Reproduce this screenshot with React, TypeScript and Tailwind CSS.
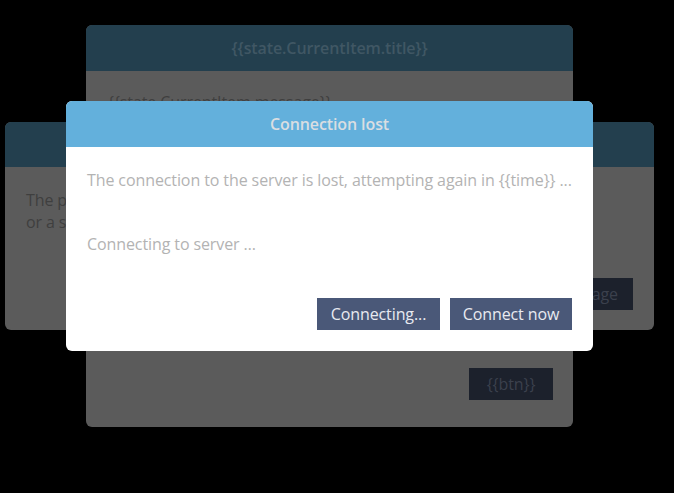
export default function App() {
  return (
    <div className="relative h-[493px] w-[674px] overflow-hidden bg-black font-['Open_Sans',sans-serif] tracking-[-0.1px]">
      {/* back window: item */}
      <div className="absolute left-[86px] top-[25px] flex h-[402px] w-[487px] flex-col overflow-hidden rounded-md bg-[#5b5b5b]">
        <div className="flex h-[46px] items-center justify-center bg-[#233f4e] text-[16px] font-semibold text-[#405764]">
          {"{{state.CurrentItem.title}}"}
        </div>
        <div className="flex flex-1 flex-col pb-[27px] pl-[22px] pr-[20px] pt-[20px]">
          <p className="text-[16px] leading-[22px] text-[#3f3f3f]">{"{{state.CurrentItem.message}}"}</p>
          <div className="mt-auto flex justify-end">
            <button className="h-[32px] w-[84px] bg-[#1c212c] text-[16px] text-[#3b404c]">{"{{btn}}"}</button>
          </div>
        </div>
      </div>

      {/* back window: page */}
      <div className="absolute left-[5px] top-[122px] flex h-[208px] w-[649px] flex-col overflow-hidden rounded-md bg-[#5b5b5b]">
        <div className="flex h-[45px] items-center justify-center bg-[#233f4e] text-[16px] font-semibold text-[#405764]">
          Page out of date
        </div>
        <div className="flex flex-1 flex-col px-[21px] pb-[20px] pt-[22px]">
          <p className="text-[16px] leading-[22px] text-[#3f3f3f]">
            The page could not be refreshed. This can be caused by a network issue
            <br />
            or a server that is not responding.
          </p>
          <div className="mt-auto flex justify-end">
            <button className="h-[32px] bg-[#1c212c] px-[15px] text-[16px] text-[#3b404c]">Reload page</button>
          </div>
        </div>
      </div>

      {/* front window */}
      <div className="absolute left-[66px] top-[101px] flex h-[250px] w-[527px] flex-col overflow-hidden rounded-md bg-white">
        <div className="flex h-[46px] items-center justify-center bg-[#63b0dc] text-[16px] font-semibold text-[#dadee2]">
          Connection lost
        </div>
        <div className="flex flex-1 flex-col px-[21px] pb-[21px] pt-[22px]">
          <p className="whitespace-nowrap text-[16px] leading-[22px] text-[#b3b3b3]">
            {"The connection to the server is lost, attempting again in {{time}} ..."}
          </p>
          <p className="mt-[42px] text-[16px] leading-[22px] text-[#b3b3b3]">Connecting to server …</p>
          <div className="mt-auto flex justify-end gap-[10px]">
            <button className="h-[32px] w-[123px] bg-[#4a5878] text-[16px] text-[#e8eaf0]">Connecting...</button>
            <button className="h-[32px] w-[122px] bg-[#4a5878] text-[16px] text-[#e8eaf0]">Connect now</button>
          </div>
        </div>
      </div>
    </div>
  );
}
